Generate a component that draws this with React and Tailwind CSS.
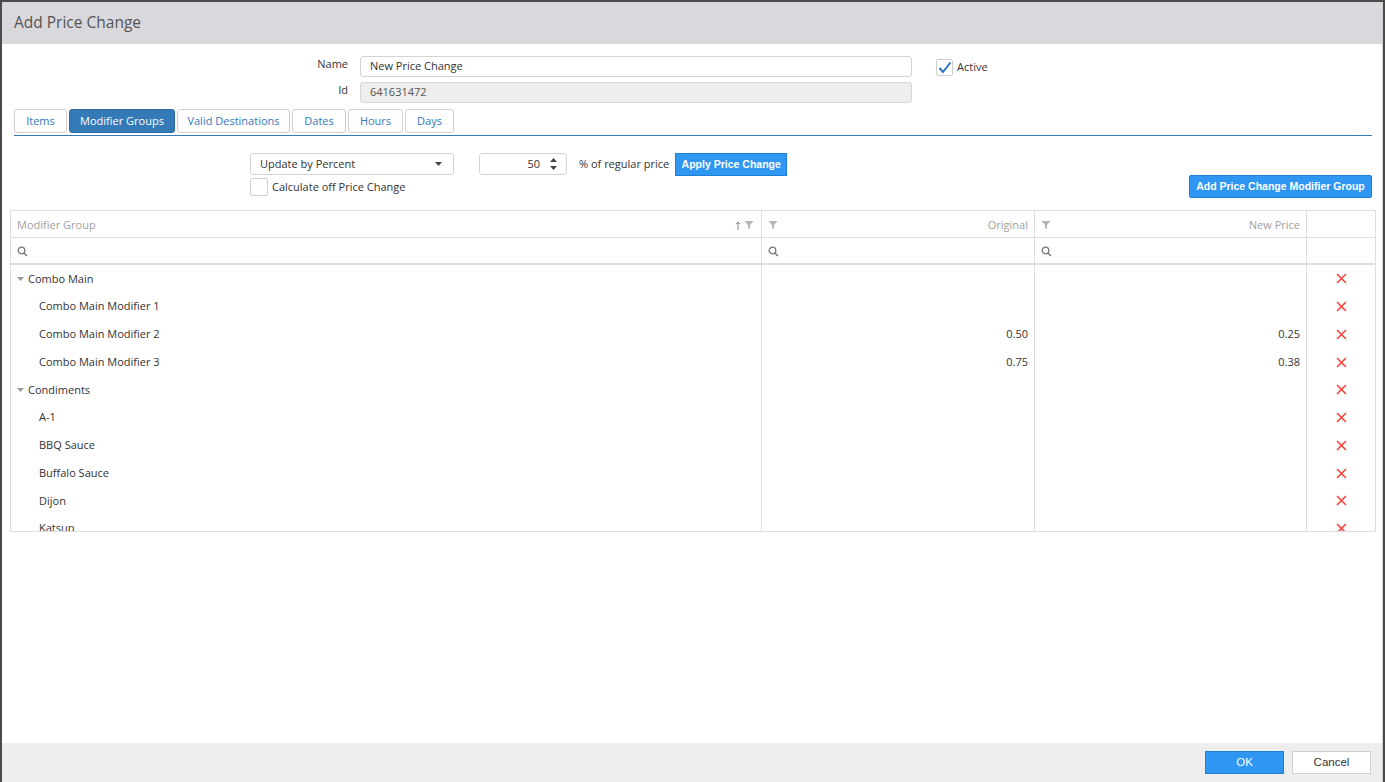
import React from 'react';

const font = { fontFamily: '"Open Sans", "Noto Sans", sans-serif' };

const rows = [
  { name: 'Combo Main', group: true },
  { name: 'Combo Main Modifier 1' },
  { name: 'Combo Main Modifier 2', original: '0.50', price: '0.25' },
  { name: 'Combo Main Modifier 3', original: '0.75', price: '0.38' },
  { name: 'Condiments', group: true },
  { name: 'A-1' },
  { name: 'BBQ Sauce' },
  { name: 'Buffalo Sauce' },
  { name: 'Dijon' },
  { name: 'Katsup' },
];

const tabs = [
  { label: 'Items', w: 'w-[53px]' },
  { label: 'Modifier Groups', w: 'w-[106px]', active: true },
  { label: 'Valid Destinations', w: 'w-[113px]' },
  { label: 'Dates', w: 'w-[54px]' },
  { label: 'Hours', w: 'w-[55px]' },
  { label: 'Days', w: 'w-[49px]' },
];

const Funnel = () => (
  <svg width="10" height="10" viewBox="0 0 10 10">
    <path d="M0.5 1 H9.5 L6 5 V9 L4 8 V5 Z" fill="#b5b5b5" />
  </svg>
);

const Search = () => (
  <svg width="11" height="11" viewBox="0 0 11 11">
    <circle cx="4.5" cy="4.5" r="3.3" fill="none" stroke="#777" strokeWidth="1.3" />
    <path d="M7 7 L10 10" stroke="#777" strokeWidth="1.5" />
  </svg>
);

const RedX = () => (
  <svg width="11" height="11" viewBox="0 0 11 11">
    <path d="M1 1 L10 10 M10 1 L1 10" stroke="#f2453d" strokeWidth="1.6" />
  </svg>
);

export default function App() {
  return (
    <div className="w-[1385px] h-[782px] bg-[#4b4b4b] pt-[2px] pl-[2px] overflow-hidden" style={font}>
      <div className="w-[1381px] h-[780px] bg-white flex flex-col border-r border-[#d0d0d0]">

        {/* HEADER */}
        <div className="h-[42px] bg-[#d9d8dc] flex items-center pl-[12px] text-[15.5px] text-[#555]">
          Add Price Change
        </div>

        {/* BODY */}
        <div className="flex-1 flex flex-col">
          <div className="pl-[12px] pr-[10px] pt-[12px]">
            <div className="flex items-start">
              <div className="flex flex-col gap-[5px]">
                <div className="flex items-center">
                  <div className="w-[346px] text-right text-[11px] text-[#333] pr-[12px] -mt-[4px]">Name</div>
                  <div className="w-[552px] h-[21px] border border-[#d3d3d3] rounded-[3px] flex items-center px-[9px] text-[11px] text-[#333]">
                    New Price Change
                  </div>
                </div>
                <div className="flex items-center">
                  <div className="w-[346px] text-right text-[11px] text-[#333] pr-[12px] -mt-[4px]">Id</div>
                  <div className="w-[552px] h-[21px] border border-[#d8d8d8] bg-[#eeeeee] rounded-[3px] flex items-center px-[9px] text-[11px] text-[#555]">
                    641631472
                  </div>
                </div>
              </div>
              <div className="ml-[24px] mt-[3px] flex items-center gap-[4px]">
                <div className="w-[17px] h-[17px] border border-[#cfcfcf] rounded-[2px] bg-white flex items-center justify-center">
                  <svg width="14" height="13" viewBox="0 0 14 13">
                    <path d="M1.5 7 L5 11 L12.5 1.5" fill="none" stroke="#2f72c4" strokeWidth="2" />
                  </svg>
                </div>
                <span className="text-[11px] text-[#333]">Active</span>
              </div>
            </div>

            {/* TABS */}
            <div className="flex gap-[2px] mt-[6px]">
              {tabs.map((t) => (
                <div
                  key={t.label}
                  className={
                    t.active
                      ? `${t.w} h-[24px] flex items-center justify-center rounded-[3px] border border-[#2e6da4] bg-[#337ab7] text-white text-[11px]`
                      : `${t.w} h-[24px] flex items-center justify-center rounded-[3px] border border-[#d0d0d0] bg-white text-[#337ab7] text-[11px]`
                  }
                >
                  {t.label}
                </div>
              ))}
            </div>
            <div className="mt-[2px] h-px bg-[#337ab7]" />

            {/* CONTROLS */}
            <div className="flex items-start mt-[17px]">
              <div className="ml-[236px] flex flex-col gap-[3px]">
                <div className="w-[204px] h-[22px] border border-[#d3d3d3] rounded-[3px] flex items-center justify-between pl-[9px] pr-[11px] text-[11px] text-[#333]">
                  <span>Update by Percent</span>
                  <svg width="7" height="4" viewBox="0 0 7 4"><path d="M0 0 H7 L3.5 4 Z" fill="#444" /></svg>
                </div>
                <div className="flex items-center gap-[4px]">
                  <div className="w-[18px] h-[18px] border border-[#cfcfcf] rounded-[2px] bg-white" />
                  <span className="text-[11px] text-[#333]">Calculate off Price Change</span>
                </div>
              </div>
              <div className="ml-[25px] w-[88px] h-[22px] border border-[#d3d3d3] rounded-[3px] flex items-center justify-end pr-[9px] gap-[10px] text-[11px] text-[#333]">
                <span>50</span>
                <svg width="7" height="14" viewBox="0 0 7 14">
                  <path d="M0 5 L3.5 1 L7 5 Z" fill="#444" />
                  <path d="M0 9 L3.5 13 L7 9 Z" fill="#444" />
                </svg>
              </div>
              <div className="ml-[12px] h-[22px] flex items-center text-[11px] text-[#333]">% of regular price</div>
              <div
                className="ml-[6px] w-[112px] h-[23px] bg-[#2f96f1] border border-[#1f7fd6] flex items-center justify-center text-white font-bold text-[10.5px]"
                style={{ fontFamily: '"Liberation Sans", Arial, sans-serif' }}
              >
                Apply Price Change
              </div>
              <div
                className="ml-auto mt-[22px] w-[183px] h-[23px] bg-[#2f96f1] border border-[#1f7fd6] rounded-[2px] flex items-center justify-center text-white font-bold text-[10.5px]"
                style={{ fontFamily: '"Liberation Sans", Arial, sans-serif' }}
              >
                Add Price Change Modifier Group
              </div>
            </div>
          </div>

          {/* GRID */}
          <div className="ml-[8px] mt-[12px] w-[1366px] border border-[#dddddd] text-[11px]">
            <div className="grid grid-cols-[751px_273px_272px_1fr] h-[27px] border-b border-[#dddddd] text-[#a0a0a0]">
              <div className="flex items-center justify-between pl-[6px] pr-[7px] pt-[2px] border-r border-[#dddddd]">
                <span>Modifier Group</span>
                <div className="flex items-center gap-[3px]">
                  <svg width="6" height="9" viewBox="0 0 6 9">
                    <path d="M3 9 V1 M0.8 3.2 L3 1 L5.2 3.2" fill="none" stroke="#888" strokeWidth="1" />
                  </svg>
                  <Funnel />
                </div>
              </div>
              <div className="flex items-center justify-between pl-[6px] pr-[6px] pt-[2px] border-r border-[#dddddd]">
                <Funnel />
                <span>Original</span>
              </div>
              <div className="flex items-center justify-between pl-[6px] pr-[6px] pt-[2px] border-r border-[#dddddd]">
                <Funnel />
                <span>New Price</span>
              </div>
              <div />
            </div>
            <div className="grid grid-cols-[751px_273px_272px_1fr] h-[27px] border-b-2 border-[#dddddd]">
              <div className="flex items-center pl-[6px] pt-[1px] border-r border-[#dddddd]"><Search /></div>
              <div className="flex items-center pl-[6px] pt-[1px] border-r border-[#dddddd]"><Search /></div>
              <div className="flex items-center pl-[6px] pt-[1px] border-r border-[#dddddd]"><Search /></div>
              <div />
            </div>
            <div className="h-[266px] overflow-hidden grid grid-cols-[751px_273px_272px_1fr] grid-rows-[repeat(10,27.75px)] text-[#333]">
              {rows.map((r) => (
                <React.Fragment key={r.name}>
                  <div className="flex items-center border-r border-[#dddddd]">
                    {r.group ? (
                      <div className="flex items-center pl-[6px] gap-[4px]">
                        <svg width="7" height="4" viewBox="0 0 7 4"><path d="M0 0 H7 L3.5 4 Z" fill="#999" /></svg>
                        <span>{r.name}</span>
                      </div>
                    ) : (
                      <span className="pl-[28px]">{r.name}</span>
                    )}
                  </div>
                  <div className="flex items-center justify-end pr-[6px] border-r border-[#dddddd]">{r.original}</div>
                  <div className="flex items-center justify-end pr-[6px] border-r border-[#dddddd]">{r.price}</div>
                  <div className="flex items-center justify-center"><RedX /></div>
                </React.Fragment>
              ))}
            </div>
          </div>
        </div>

        {/* FOOTER */}
        <div
          className="h-[39px] bg-[#eeeeee] flex items-start justify-end gap-[8px] pt-[8px] pr-[11px] text-[11.5px]"
          style={{ fontFamily: '"Liberation Sans", Arial, sans-serif' }}
        >
          <div className="w-[79px] h-[23px] bg-[#2f96f1] border border-[#1f7fd6] flex items-center justify-center text-white">OK</div>
          <div className="w-[79px] h-[23px] bg-white border border-[#d0d0d0] flex items-center justify-center text-[#333]">Cancel</div>
        </div>
      </div>
    </div>
  );
}
